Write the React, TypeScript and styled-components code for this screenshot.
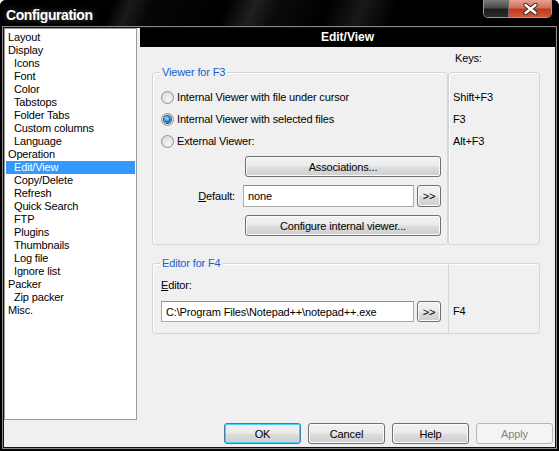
import React from 'react';
import styled, { createGlobalStyle, css } from 'styled-components';

const GlobalStyle = createGlobalStyle`
  html, body {
    margin: 0;
    padding: 0;
    background: #ffffff;
  }

  body {
    font-family: 'Liberation Sans', Arial, sans-serif;
    font-size: 11px;
    letter-spacing: -0.15px;
    color: #000000;
  }
`;

const Window = styled.div`
  width: 559px;
  height: 451px;
  box-sizing: border-box;
  display: flex;
  flex-direction: column;
  background: #000000;
  border-radius: 6px 6px 0 0;
  overflow: hidden;
`;

const TitleBar = styled.div`
  height: 28px;
  flex: none;
  display: flex;
  justify-content: space-between;
  align-items: flex-start;
  background: linear-gradient(
    112deg,
    #000000 0%,
    #000000 20%,
    #1b1b1b 23%,
    #060606 27%,
    #000000 40%,
    #202020 45%,
    #0b0b0b 49%,
    #000000 58%,
    #191919 64%,
    #000000 70%,
    #000000 100%
  );
`;

const Title = styled.div`
  padding-left: 6px;
  line-height: 31px;
  color: #ffffff;
  font-size: 14px;
  font-weight: bold;
  letter-spacing: -0.4px;
  text-shadow: 0 0 6px rgba(255, 255, 255, 0.35);
`;

const CaptionButtons = styled.div`
  display: flex;
  margin-right: 7px;
  border: 1px solid #9a9a9a;
  border-top: none;
  border-radius: 0 0 5px 5px;
  overflow: hidden;
`;

const CaptionButton = styled.div<{ $close?: boolean }>`
  height: 17px;
  width: ${(p) => (p.$close ? '42px' : '24px')};
  display: flex;
  align-items: center;
  justify-content: center;
  background: ${(p) =>
    p.$close
      ? 'linear-gradient(#e7a291 0%, #d26f5a 45%, #c1391e 55%, #d4573c 100%)'
      : 'linear-gradient(#7a7a7a 0%, #4a4a4a 45%, #1c1c1c 55%, #2c2c2c 100%)'};
  & + & {
    border-left: 1px solid #6a6a6a;
  }
`;

const Client = styled.div`
  flex: 1;
  margin: 0 4px 4px;
  background: #f0f0f0;
  display: grid;
  grid-template-columns: 133px 1fr;
  grid-template-rows: 392px 1fr;
  column-gap: 3px;
  box-shadow: 0 0 0 1px #111111, 0 0 0 2px #8a8a8a;
`;

const Tree = styled.ul`
  grid-row: 1;
  grid-column: 1;
  margin: 0;
  padding: 2px 1px 0 1px;
  list-style: none;
  background: #ffffff;
  border: 1px solid #9a9a9a;
`;

const TreeItem = styled.li<{ $child?: boolean; $selected?: boolean }>`
  height: 13px;
  line-height: 13px;
  white-space: nowrap;
  padding-left: ${(p) => (p.$child ? '8px' : '2px')};
  ${(p) =>
    p.$selected &&
    css`
      background: #3399ff;
      color: #ffffff;
    `}
`;

const Page = styled.div`
  grid-row: 1;
  grid-column: 2;
  display: flex;
  flex-direction: column;
`;

const PageHeader = styled.div`
  height: 19px;
  line-height: 19px;
  background: #000000;
  color: #ffffff;
  font-size: 12px;
  font-weight: bold;
  letter-spacing: 0;
  text-align: center;
`;

const PageBody = styled.div`
  padding: 0 15px 0 12px;
`;

const TopGrid = styled.div`
  display: grid;
  grid-template-columns: 296px 92px;
  grid-template-rows: 25px auto;
`;

const KeysLabel = styled.div`
  grid-row: 1;
  grid-column: 2;
  align-self: end;
  line-height: 13px;
  padding: 0 0 7px 7px;
`;

const Group = styled.div`
  box-sizing: border-box;
  border: 1px solid #d2d6da;
  border-radius: 3px;
  box-shadow: inset 1px 1px 0 #ffffff;
`;

const ViewerGroup = styled(Group)`
  grid-row: 2;
  grid-column: 1;
  padding: 0 7px 8px 8px;
`;

const KeysBox = styled(Group)`
  grid-row: 2;
  grid-column: 2;
  padding: 13px 0 0 4px;
`;

const KeyRow = styled.div`
  height: 22px;
  line-height: 22px;
`;

const Legend = styled.div`
  width: fit-content;
  margin: -7px 0 0 -1px;
  padding: 0 2px;
  line-height: 13px;
  background: #f0f0f0;
  color: #1660cc;
`;

const RadioList = styled.div`
  margin-top: 7px;
`;

const RadioRow = styled.label`
  height: 22px;
  display: flex;
  align-items: center;
  gap: 3px;
`;

const RadioCircle = styled.span`
  box-sizing: border-box;
  width: 13px;
  height: 13px;
  border-radius: 50%;
  border: 1px solid #8e8f8f;
  background: radial-gradient(circle at 60% 65%, #f6f6f6 0%, #e4e4e4 55%, #cfcfcf 100%);
  display: flex;
  align-items: center;
  justify-content: center;
`;

const RadioDot = styled.span`
  width: 7px;
  height: 7px;
  border-radius: 50%;
  background: radial-gradient(circle at 40% 35%, #a9e4ff 0%, #2a8ad4 45%, #0d3f80 100%);
  box-shadow: 0 0 0 1px #1d5a9a;
`;

const ControlGrid = styled.div`
  margin-top: 4px;
  display: grid;
  grid-template-columns: 79px 171px 24px;
  grid-template-rows: 21px 22px 21px;
  column-gap: 3px;
  row-gap: 8px;
`;

const FieldLabel = styled.div`
  line-height: 22px;
  text-align: right;
  padding-right: 5px;
`;

const TextBox = styled.div<{ $width: number }>`
  box-sizing: border-box;
  width: ${(p) => p.$width}px;
  height: 22px;
  line-height: 20px;
  padding-left: 4px;
  background: #ffffff;
  border: 1px solid #a9a9a9;
  border-top-color: #8f8f8f;
  white-space: nowrap;
  overflow: hidden;
`;

const Button = styled.div<{ $default?: boolean; $disabled?: boolean }>`
  box-sizing: border-box;
  height: 100%;
  display: flex;
  align-items: center;
  justify-content: center;
  border: 1px solid #707070;
  border-radius: 3px;
  background: linear-gradient(#f2f2f2 0%, #ebebeb 48%, #dddddd 52%, #cfcfcf 100%);
  box-shadow: inset 0 0 0 1px #fbfbfb;
  white-space: nowrap;
  ${(p) =>
    p.$default &&
    css`
      border-color: #3c7fb1;
      box-shadow: inset 0 0 0 1px #48d3fb;
    `}
  ${(p) =>
    p.$disabled &&
    css`
      border-color: #b5b8bb;
      background: #f4f4f4;
      box-shadow: none;
      color: #838383;
    `}
`;

const WideButton = styled(Button)`
  grid-column: 2 / 4;
  margin-left: 2px;
`;

const EditorGroup = styled(Group)`
  margin-top: 18px;
  display: grid;
  grid-template-columns: 296px 1fr;
`;

const EditorMain = styled.div`
  border-right: 1px solid #d2d6da;
  padding: 0 0 11px 8px;
`;

const EditorLabel = styled.div`
  line-height: 13px;
  margin: 9px 0 9px;
`;

const InputRow = styled.div`
  display: flex;
  gap: 3px;
  height: 21px;
  & > div {
    height: 21px;
  }
`;

const SmallButton = styled(Button)`
  width: 24px;
  flex: none;
`;

const EditorKeys = styled.div`
  display: flex;
  align-items: flex-end;
  padding: 0 0 11px 4px;
  line-height: 21px;
`;

const Footer = styled.div`
  grid-row: 2;
  grid-column: 1 / -1;
  display: flex;
  justify-content: flex-end;
  align-items: flex-start;
  gap: 7px;
  padding: 3px 2px 0 0;
`;

const FooterButton = styled(Button)`
  width: 77px;
  height: 21px;
`;

const treeItems: { label: string; child?: boolean }[] = [
  { label: 'Layout' },
  { label: 'Display' },
  { label: 'Icons', child: true },
  { label: 'Font', child: true },
  { label: 'Color', child: true },
  { label: 'Tabstops', child: true },
  { label: 'Folder Tabs', child: true },
  { label: 'Custom columns', child: true },
  { label: 'Language', child: true },
  { label: 'Operation' },
  { label: 'Edit/View', child: true },
  { label: 'Copy/Delete', child: true },
  { label: 'Refresh', child: true },
  { label: 'Quick Search', child: true },
  { label: 'FTP', child: true },
  { label: 'Plugins', child: true },
  { label: 'Thumbnails', child: true },
  { label: 'Log file', child: true },
  { label: 'Ignore list', child: true },
  { label: 'Packer' },
  { label: 'Zip packer', child: true },
  { label: 'Misc.' },
];

const viewerOptions = [
  { label: 'Internal Viewer with file under cursor', key: 'Shift+F3' },
  { label: 'Internal Viewer with selected files', key: 'F3', checked: true },
  { label: 'External Viewer:', key: 'Alt+F3' },
];

const CloseGlyph = () => (
  <svg width="15" height="12" viewBox="0 0 15 12">
    <path d="M2.5 2 L12.5 10 M12.5 2 L2.5 10" stroke="#3a2a26" strokeWidth="4.4" strokeLinecap="round" />
    <path d="M2.5 2 L12.5 10 M12.5 2 L2.5 10" stroke="#ffffff" strokeWidth="2.4" strokeLinecap="round" />
  </svg>
);

const App: React.FC = () => {
  return (
    <>
      <GlobalStyle />
      <Window>
        <TitleBar>
          <Title>Configuration</Title>
          <CaptionButtons>
            <CaptionButton />
            <CaptionButton $close>
              <CloseGlyph />
            </CaptionButton>
          </CaptionButtons>
        </TitleBar>
        <Client>
          <Tree>
            {treeItems.map((item) => (
              <TreeItem key={item.label} $child={item.child} $selected={item.label === 'Edit/View'}>
                {item.label}
              </TreeItem>
            ))}
          </Tree>
          <Page>
            <PageHeader>Edit/View</PageHeader>
            <PageBody>
              <TopGrid>
                <KeysLabel>Keys:</KeysLabel>
                <ViewerGroup>
                  <Legend>Viewer for F3</Legend>
                  <RadioList>
                    {viewerOptions.map((opt) => (
                      <RadioRow key={opt.key}>
                        <RadioCircle>{opt.checked && <RadioDot />}</RadioCircle>
                        {opt.label}
                      </RadioRow>
                    ))}
                  </RadioList>
                  <ControlGrid>
                    <WideButton>Associations...</WideButton>
                    <FieldLabel>
                      <u>D</u>efault:
                    </FieldLabel>
                    <TextBox $width={171}>none</TextBox>
                    <Button>&gt;&gt;</Button>
                    <WideButton>Configure internal viewer...</WideButton>
                  </ControlGrid>
                </ViewerGroup>
                <KeysBox>
                  {viewerOptions.map((opt) => (
                    <KeyRow key={opt.key}>{opt.key}</KeyRow>
                  ))}
                </KeysBox>
              </TopGrid>
              <EditorGroup>
                <EditorMain>
                  <Legend>Editor for F4</Legend>
                  <EditorLabel>
                    <u>E</u>ditor:
                  </EditorLabel>
                  <InputRow>
                    <TextBox $width={253}>C:\Program Files\Notepad++\notepad++.exe</TextBox>
                    <SmallButton>&gt;&gt;</SmallButton>
                  </InputRow>
                </EditorMain>
                <EditorKeys>F4</EditorKeys>
              </EditorGroup>
            </PageBody>
          </Page>
          <Footer>
            <FooterButton $default>OK</FooterButton>
            <FooterButton>Cancel</FooterButton>
            <FooterButton>Help</FooterButton>
            <FooterButton $disabled>Apply</FooterButton>
          </Footer>
        </Client>
      </Window>
    </>
  );
};

export default App;
